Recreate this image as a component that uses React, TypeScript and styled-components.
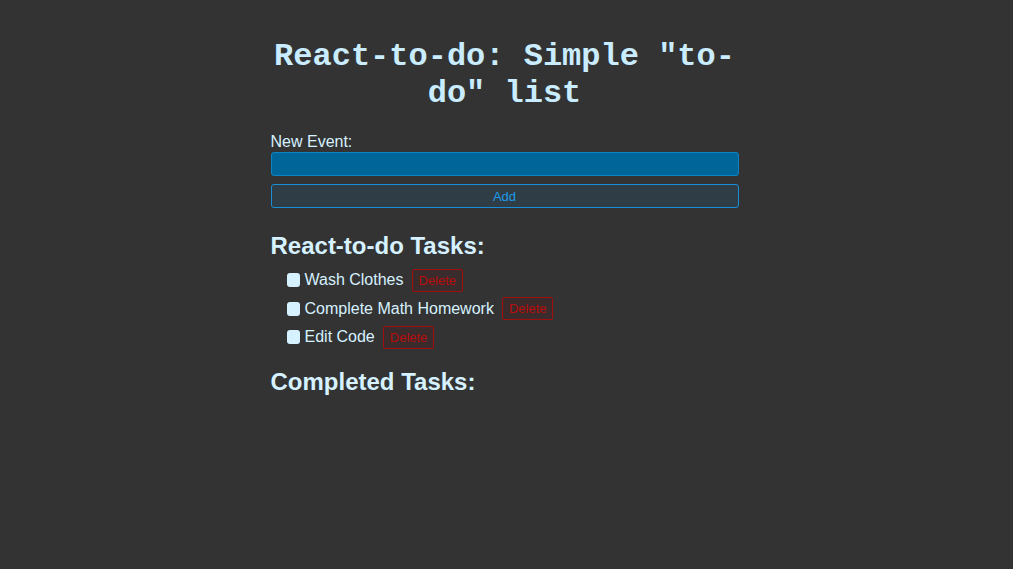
import React from "react";
import styled, { createGlobalStyle } from "styled-components";

const Global = createGlobalStyle`
  html, body { margin: 0; padding: 0; background: #333333; }
  body { font-family: "Liberation Sans", Arial, sans-serif; color: #d6f1ff; }
`;

const Page = styled.div`
  width: 468px;
  margin: 0 auto;
  padding-top: 20px;
  transform: translateX(-2px);
`;

const Title = styled.h1`
  font-family: "Liberation Mono", "Courier New", monospace;
  font-weight: bold;
  font-size: 32px;
  line-height: 37px;
  text-align: center;
  color: #c9ecff;
  margin: 18px 0 21px;
`;

const Form = styled.form`
  display: flex;
  flex-direction: column;
`;

const Label = styled.label`
  font-size: 16px;
  line-height: 18px;
  color: #d6f1ff;
  margin-bottom: 1px;
`;

const Input = styled.input`
  box-sizing: border-box;
  height: 24px;
  width: 100%;
  background: #00669a;
  border: 1px solid #0a85c4;
  border-radius: 3px;
  color: #fff;
  outline: none;
`;

const AddButton = styled.button`
  box-sizing: border-box;
  margin-top: 8px;
  height: 24px;
  width: 100%;
  background: #2f3d47;
  border: 1px solid #1a8ed6;
  border-radius: 3px;
  color: #1c9be8;
  font-family: "Liberation Sans", Arial, sans-serif;
  font-size: 13px;
`;

const Heading = styled.h2<{ $top: number }>`
  font-size: 24px;
  line-height: 28px;
  font-weight: bold;
  color: #d6f1ff;
  margin: ${(p) => p.$top}px 0 8px;
`;

const List = styled.ul`
  list-style: none;
  margin: 0;
  padding: 0 0 0 16px;
  display: flex;
  flex-direction: column;
  gap: 4.5px;
`;

const Item = styled.li`
  display: flex;
  align-items: center;
  height: 24px;
  font-size: 16px;
`;

const Check = styled.span`
  width: 13px;
  height: 14px;
  border-radius: 3px;
  background: #d6f1ff;
  margin-right: 5px;
`;

const Delete = styled.button`
  margin-left: 8px;
  height: 23px;
  padding: 0 6px;
  background: #3a2c2c;
  border: 1px solid #a00e0e;
  border-radius: 2px;
  color: #b80d0d;
  font-family: "Liberation Sans", Arial, sans-serif;
  font-size: 13px;
`;

const tasks = ["Wash Clothes", "Complete Math Homework", "Edit Code"];

export default function App() {
  return (
    <>
      <Global />
      <Page>
        <Title>React-to-do: Simple "to-do" list</Title>
        <Form onSubmit={(e) => e.preventDefault()}>
          <Label>New Event:</Label>
          <Input />
          <AddButton type="submit">Add</AddButton>
        </Form>
        <Heading $top={24}>React-to-do Tasks:</Heading>
        <List>
          {tasks.map((t) => (
            <Item key={t}>
              <Check />
              {t}
              <Delete>Delete</Delete>
            </Item>
          ))}
        </List>
        <Heading $top={19}>Completed Tasks:</Heading>
      </Page>
    </>
  );
}
